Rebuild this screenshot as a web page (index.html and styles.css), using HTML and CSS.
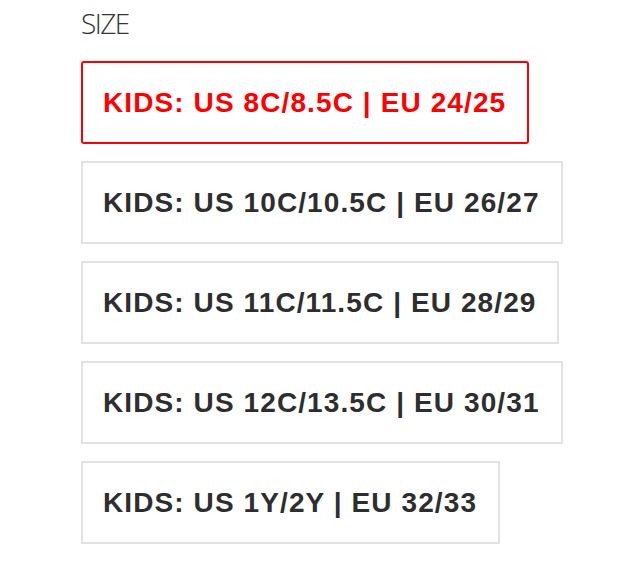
FILE: index.html
```html
<!DOCTYPE html>
<html>
<head>
<meta charset="utf-8">
<link rel="stylesheet" href="styles.css">
</head>
<body>
<div class="size-picker">
  <div class="label">SIZE</div>
  <div class="options">
    <button class="opt selected">KIDS: US 8C/8.5C | EU 24/25</button>
    <button class="opt">KIDS: US 10C/10.5C | EU 26/27</button>
    <button class="opt">KIDS: US 11C/11.5C | EU 28/29</button>
    <button class="opt">KIDS: US 12C/13.5C | EU 30/31</button>
    <button class="opt">KIDS: US 1Y/2Y | EU 32/33</button>
  </div>
</div>
</body>
</html>
```
FILE: styles.css
```css
html, body { margin: 0; padding: 0; background: #fff; }
.size-picker {
  padding: 6px 0 0 81px;
  font-family: "Liberation Sans", Arial, sans-serif;
}
.label {
  font-family: "Open Sans", sans-serif;
  font-weight: 300;
  font-size: 28px;
  line-height: 34px;
  color: #333;
  letter-spacing: -1.6px;
  height: 55px;
}
.options {
  display: flex;
  flex-direction: column;
  align-items: flex-start;
  gap: 17px;
}
.opt {
  font-family: "Liberation Sans", Arial, sans-serif;
  font-weight: 700;
  font-size: 28px;
  letter-spacing: 1.1px;
  color: #2e2e2e;
  background: #fff;
  border: 2px solid #e2e2e2;
  border-radius: 0;
  height: 83px;
  padding: 0 21px 0 20px;
  margin: 0;
  text-align: left;
  white-space: nowrap;
}
.opt.selected {
  color: #ff0000;
  border-color: #ff0000;
  border-radius: 3px;
}
```
